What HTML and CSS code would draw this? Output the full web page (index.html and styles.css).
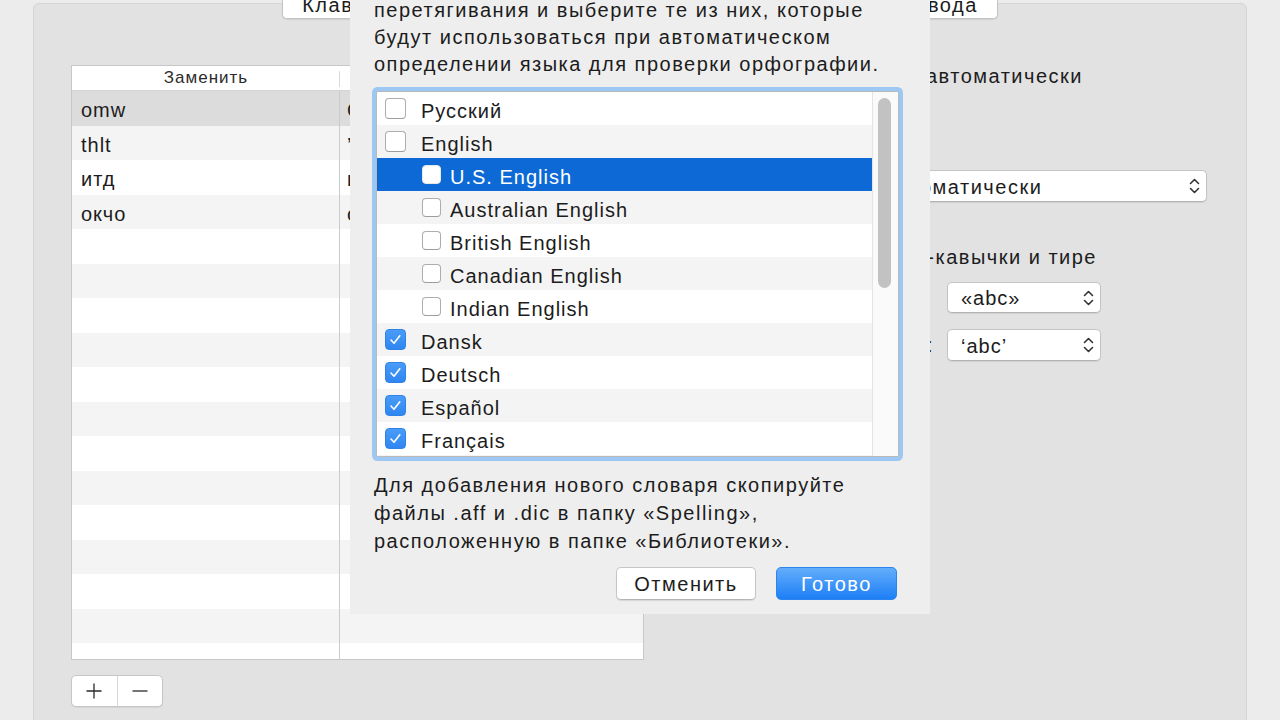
FILE: index.html
```html
<!DOCTYPE html>
<html lang="ru">
<head>
<meta charset="utf-8">
<title>Клавиатура — Текст</title>
<link rel="stylesheet" href="styles.css">
</head>
<body>
<div class="window">
  <div class="panel">
    <div class="tabs">
      <div class="seg-group">
        <div class="seg">Клавиатура</div>
        <div class="seg seg-sel">Текст</div>
        <div class="seg">Сочетания клавиш</div>
        <div class="seg">Источники ввода</div>
      </div>
    </div>
    <div class="content">
      <div class="leftcol">
        <div class="table">
          <div class="thead">
            <div class="th c1">Заменить</div>
            <div class="th c2">На</div>
          </div>
          <div class="tbody">
            <div class="tr tr-sel"><div class="td c1">omw</div><div class="td c2">On my way!</div></div>
            <div class="tr"><div class="td c1">thlt</div><div class="td c2">’thanks a lot’</div></div>
            <div class="tr"><div class="td c1">итд</div><div class="td c2">и так далее</div></div>
            <div class="tr"><div class="td c1">окчо</div><div class="td c2">окей, что</div></div>
            <div class="tr"><div class="td c1"></div><div class="td c2"></div></div>
            <div class="tr"><div class="td c1"></div><div class="td c2"></div></div>
            <div class="tr"><div class="td c1"></div><div class="td c2"></div></div>
            <div class="tr"><div class="td c1"></div><div class="td c2"></div></div>
            <div class="tr"><div class="td c1"></div><div class="td c2"></div></div>
            <div class="tr"><div class="td c1"></div><div class="td c2"></div></div>
            <div class="tr"><div class="td c1"></div><div class="td c2"></div></div>
            <div class="tr"><div class="td c1"></div><div class="td c2"></div></div>
            <div class="tr"><div class="td c1"></div><div class="td c2"></div></div>
            <div class="tr"><div class="td c1"></div><div class="td c2"></div></div>
            <div class="tr"><div class="td c1"></div><div class="td c2"></div></div>
            <div class="tr"><div class="td c1"></div><div class="td c2"></div></div>
            <div class="tr"><div class="td c1"></div><div class="td c2"></div></div>
            <div class="tr"><div class="td c1"></div><div class="td c2"></div></div>
          </div>
        </div>
        <div class="pm">
          <span class="pm-btn"><svg width="18" height="18" viewBox="0 0 18 18"><path d="M9 1.5V16.5M1.5 9H16.5" stroke="#2a2a2a" stroke-width="1.3" fill="none"/></svg></span>
          <span class="pm-btn"><svg width="18" height="18" viewBox="0 0 18 18"><path d="M1.5 9H16.5" stroke="#2a2a2a" stroke-width="1.3" fill="none"/></svg></span>
        </div>
      </div>
      <div class="rightcol">
        <div class="rrow r-a"><span class="rcb"></span><span>Исправлять ошибки автоматически</span></div>
        <div class="rrow r-pop1">
          <span class="rlabel">Правописание:</span>
          <div class="popup popup-wide"><span class="ptext">Автоматически</span>
            <svg class="chev" width="11" height="18" viewBox="0 0 11 18"><path d="M1.5 6.5L5.5 2.5L9.5 6.5M1.5 11.5L5.5 15.5L9.5 11.5" stroke="#333" stroke-width="1.6" fill="none" stroke-linecap="round" stroke-linejoin="round"/></svg>
          </div>
        </div>
        <div class="rrow r-c"><span class="rcb"></span><span>Использовать смарт-кавычки и тире</span></div>
        <div class="rrow r-q">
          <span class="qlabel">Двойные кавычки:</span>
          <div class="popup popup-narrow"><span class="ptext">«abc»</span>
            <svg class="chev" width="11" height="18" viewBox="0 0 11 18"><path d="M1.5 6.5L5.5 2.5L9.5 6.5M1.5 11.5L5.5 15.5L9.5 11.5" stroke="#333" stroke-width="1.6" fill="none" stroke-linecap="round" stroke-linejoin="round"/></svg>
          </div>
        </div>
        <div class="rrow r-q2">
          <span class="qlabel">Одинарные кавычки:</span>
          <div class="popup popup-narrow"><span class="ptext">‘abc’</span>
            <svg class="chev" width="11" height="18" viewBox="0 0 11 18"><path d="M1.5 6.5L5.5 2.5L9.5 6.5M1.5 11.5L5.5 15.5L9.5 11.5" stroke="#333" stroke-width="1.6" fill="none" stroke-linecap="round" stroke-linejoin="round"/></svg>
          </div>
        </div>
      </div>
    </div>
  </div>

  <div class="sheet">
    <div class="sheet-text">Перетащите языки в нужном порядке с помощью<br>перетягивания и выберите те из них, которые<br>будут использоваться при автоматическом<br>определении языка для проверки орфографии.</div>
    <div class="listwrap">
      <div class="list">
        <div class="row"><span class="cb"></span><span class="lbl">Русский</span></div>
        <div class="row"><span class="cb"></span><span class="lbl">English</span></div>
        <div class="row row-sub row-sel"><span class="cb"></span><span class="lbl">U.S. English</span></div>
        <div class="row row-sub"><span class="cb"></span><span class="lbl">Australian English</span></div>
        <div class="row row-sub"><span class="cb"></span><span class="lbl">British English</span></div>
        <div class="row row-sub"><span class="cb"></span><span class="lbl">Canadian English</span></div>
        <div class="row row-sub"><span class="cb"></span><span class="lbl">Indian English</span></div>
        <div class="row"><span class="cb cb-on"><svg width="19" height="19" viewBox="0 0 19 19"><path d="M5 10L8 13.2L13.8 5.8" stroke="#fff" stroke-width="1.6" fill="none" stroke-linecap="round" stroke-linejoin="round"/></svg></span><span class="lbl">Dansk</span></div>
        <div class="row"><span class="cb cb-on"><svg width="19" height="19" viewBox="0 0 19 19"><path d="M5 10L8 13.2L13.8 5.8" stroke="#fff" stroke-width="1.6" fill="none" stroke-linecap="round" stroke-linejoin="round"/></svg></span><span class="lbl">Deutsch</span></div>
        <div class="row"><span class="cb cb-on"><svg width="19" height="19" viewBox="0 0 19 19"><path d="M5 10L8 13.2L13.8 5.8" stroke="#fff" stroke-width="1.6" fill="none" stroke-linecap="round" stroke-linejoin="round"/></svg></span><span class="lbl">Español</span></div>
        <div class="row"><span class="cb cb-on"><svg width="19" height="19" viewBox="0 0 19 19"><path d="M5 10L8 13.2L13.8 5.8" stroke="#fff" stroke-width="1.6" fill="none" stroke-linecap="round" stroke-linejoin="round"/></svg></span><span class="lbl">Français</span></div>
        <div class="row"><span class="cb cb-on"><svg width="19" height="19" viewBox="0 0 19 19"><path d="M5 10L8 13.2L13.8 5.8" stroke="#fff" stroke-width="1.6" fill="none" stroke-linecap="round" stroke-linejoin="round"/></svg></span><span class="lbl">Italiano</span></div>
        <div class="row"><span class="cb cb-on"><svg width="19" height="19" viewBox="0 0 19 19"><path d="M5 10L8 13.2L13.8 5.8" stroke="#fff" stroke-width="1.6" fill="none" stroke-linecap="round" stroke-linejoin="round"/></svg></span><span class="lbl">Nederlands</span></div>
      </div>
      <div class="scroll"><div class="thumb"></div></div>
    </div>
    <div class="note">Для добавления нового словаря скопируйте<br>файлы .aff и .dic в папку «Spelling»,<br>расположенную в папке «Библиотеки».</div>
    <div class="btns">
      <div class="btn btn-cancel">Отменить</div>
      <div class="btn btn-ok">Готово</div>
    </div>
  </div>
</div>
</body>
</html>
```

FILE: styles.css
```css
* { box-sizing: border-box; }
html, body { margin: 0; padding: 0; }
body {
  background: #ececec;
  font-family: "Liberation Sans", Arial, sans-serif;
  font-size: 20px;
  letter-spacing: 1.5px;
  color: #1c1c1c;
  overflow: hidden;
}
.window {
  position: relative;
  width: 1280px;
  height: 720px;
  overflow: hidden;
}

/* Tab box */
.panel {
  margin: 3px 33px 0;
  height: 760px;
  background: #e2e2e2;
  border: 1px solid #d5d5d5;
  border-radius: 6px;
}
.tabs {
  display: flex;
  justify-content: center;
  margin-top: -16px;
}
.seg-group {
  display: flex;
  background: #fff;
  border: 1px solid #c4c4c4;
  border-top: none;
  border-radius: 0 0 5px 5px;
  box-shadow: 0 1px 1px rgba(0,0,0,0.08);
}
.seg {
  padding: 6px 19px 1px;
  line-height: 23px;
  white-space: nowrap;
  border-left: 1px solid #cacaca;
}
.seg:first-child { border-left: none; }

.content {
  display: flex;
  margin-top: 46px;
}

/* Replacement table */
.leftcol {
  margin-left: 37px;
  width: 573px;
  flex: none;
}
.table {
  height: 595px;
  background: #fff;
  border: 1px solid #c8c8c8;
  display: flex;
  flex-direction: column;
}
.thead {
  display: flex;
  height: 25px;
  flex: none;
  border-bottom: 1px solid #d4d4d4;
}
.th {
  line-height: 24px;
  font-size: 17px;
  letter-spacing: 1px;
  color: #2c2c2c;
  text-align: center;
}
.th.c1 { position: relative; }
.th.c1::after {
  content: "";
  position: absolute;
  right: 0;
  top: 5px;
  bottom: 3px;
  width: 1px;
  background: #d8d8d8;
}
.c1 { width: 268px; flex: none; }
.c2 { flex: 1; }
.tbody {
  flex: 1;
  overflow: hidden;
}
.tr {
  display: flex;
  height: 34.5px;
}
.tr:nth-child(even) { background: #f4f4f4; }
.tr.tr-sel { background: #dcdcdc; }
.td {
  padding: 5px 0 0 9px;
  line-height: 29.5px;
  letter-spacing: 1px;
  white-space: nowrap;
  overflow: hidden;
}
.td.c1 { border-right: 1px solid #cbcbcb; }
.td.c2 { padding-left: 7px; }

.pm {
  display: flex;
  width: 92px;
  height: 32px;
  margin-top: 15px;
  background: #fff;
  border: 1px solid #c6c6c6;
  border-radius: 5px;
  box-shadow: 0 1px 1px rgba(0,0,0,0.06);
}
.pm-btn {
  flex: 1;
  display: flex;
  align-items: center;
  justify-content: center;
}
.pm-btn + .pm-btn { border-left: 1px solid #d8d8d8; }

/* Right column of the Text tab */
.rightcol {
  margin-left: 46px;
  width: 518px;
  flex: none;
  display: flex;
  flex-direction: column;
}
.rrow {
  display: flex;
  justify-content: flex-end;
  align-items: center;
  white-space: nowrap;
}
.r-a { margin-top: -1px; height: 24px; line-height: 24px; padding-right: 125px; }
.r-pop1 { margin-top: 82px; height: 32px; padding-right: 1px; }
.r-c { margin-top: 43px; height: 24px; line-height: 24px; padding-right: 111px; }
.r-q { margin-top: 13px; height: 31px; padding-right: 107px; }
.r-q2 { margin-top: 16px; height: 32px; padding-right: 107px; }
.rcb {
  width: 19px;
  height: 19px;
  margin-right: 10px;
  border-radius: 4px;
  background: #3c90f2;
}
.rlabel { margin-right: 12px; }
.qlabel { width: 214px; margin-right: 12px; text-align: left; letter-spacing: 1px; }
.popup {
  height: 100%;
  display: flex;
  align-items: center;
  justify-content: space-between;
  background: #fff;
  border: 1px solid #c4c4c4;
  border-bottom-color: #b3b3b3;
  border-radius: 5px;
  box-shadow: 0 1px 1px rgba(0,0,0,0.08);
  padding: 2px 6px 0 13px;
}
.popup-wide { width: 338px; }
.popup-narrow { width: 154px; letter-spacing: 1px; }
.chev { flex: none; margin-top: -2px; }

/* Sheet */
.sheet {
  position: absolute;
  left: 350px;
  top: -30px;
  width: 580px;
  background: #eeeeee;
  padding: 0 24px 14px;
}
.sheet-text {
  line-height: 27px;
  white-space: nowrap;
}
.listwrap {
  margin: 13px 0 0 2px;
  width: 523px;
  height: 366px;
  display: flex;
  background: #fff;
  border: 1px solid #b9b9b9;
  border-radius: 2px;
  box-shadow: 0 0 0 4px #9ec8f4;
}
.list {
  flex: 1;
  overflow: hidden;
}
.row {
  display: flex;
  align-items: center;
  height: 33px;
  padding-left: 8px;
  white-space: nowrap;
  letter-spacing: 1px;
}
.row:nth-child(even) { background: #f4f4f4; }
.row.row-sub { padding-left: 45px; }
.row.row-sel { background: #0c69d5; color: #fff; }
.cb {
  flex: none;
  width: 21px;
  height: 21px;
  margin-right: 15px;
  background: #fff;
  border: 1px solid #adadad;
  border-bottom-color: #9c9c9c;
  border-radius: 4px;
  display: flex;
  align-items: center;
  justify-content: center;
}
.row-sub .cb {
  width: 19px;
  height: 19px;
  margin-right: 9px;
}
.row-sel .cb { border-color: #e8e8e8; }
.cb.cb-on {
  background: linear-gradient(#4a9cf7, #2f86f1);
  border-color: #2f82e6;
}
.lbl {
  padding-top: 5px;
  line-height: 23px;
}
.scroll {
  width: 26px;
  flex: none;
  background: #fafafa;
  border-left: 1px solid #e4e4e4;
  padding: 6px 0 0 5px;
}
.thumb {
  width: 13px;
  height: 190px;
  border-radius: 7px;
  background: #c2c2c2;
}
.note {
  margin-top: 14px;
  line-height: 28px;
  white-space: nowrap;
}
.btns {
  display: flex;
  justify-content: flex-end;
  gap: 20px;
  margin-top: 12px;
  padding-right: 9px;
}
.btn {
  height: 33px;
  border-radius: 5px;
  display: flex;
  align-items: center;
  justify-content: center;
  padding-top: 2px;
}
.btn-cancel {
  width: 140px;
  background: #fff;
  border: 1px solid #c6c6c6;
  border-bottom-color: #b5b5b5;
  box-shadow: 0 1px 1px rgba(0,0,0,0.1);
}
.btn-ok {
  width: 121px;
  color: #fff;
  background: linear-gradient(#63adfb, #1d7ff6);
  border: 1px solid #2c85ef;
}
```
